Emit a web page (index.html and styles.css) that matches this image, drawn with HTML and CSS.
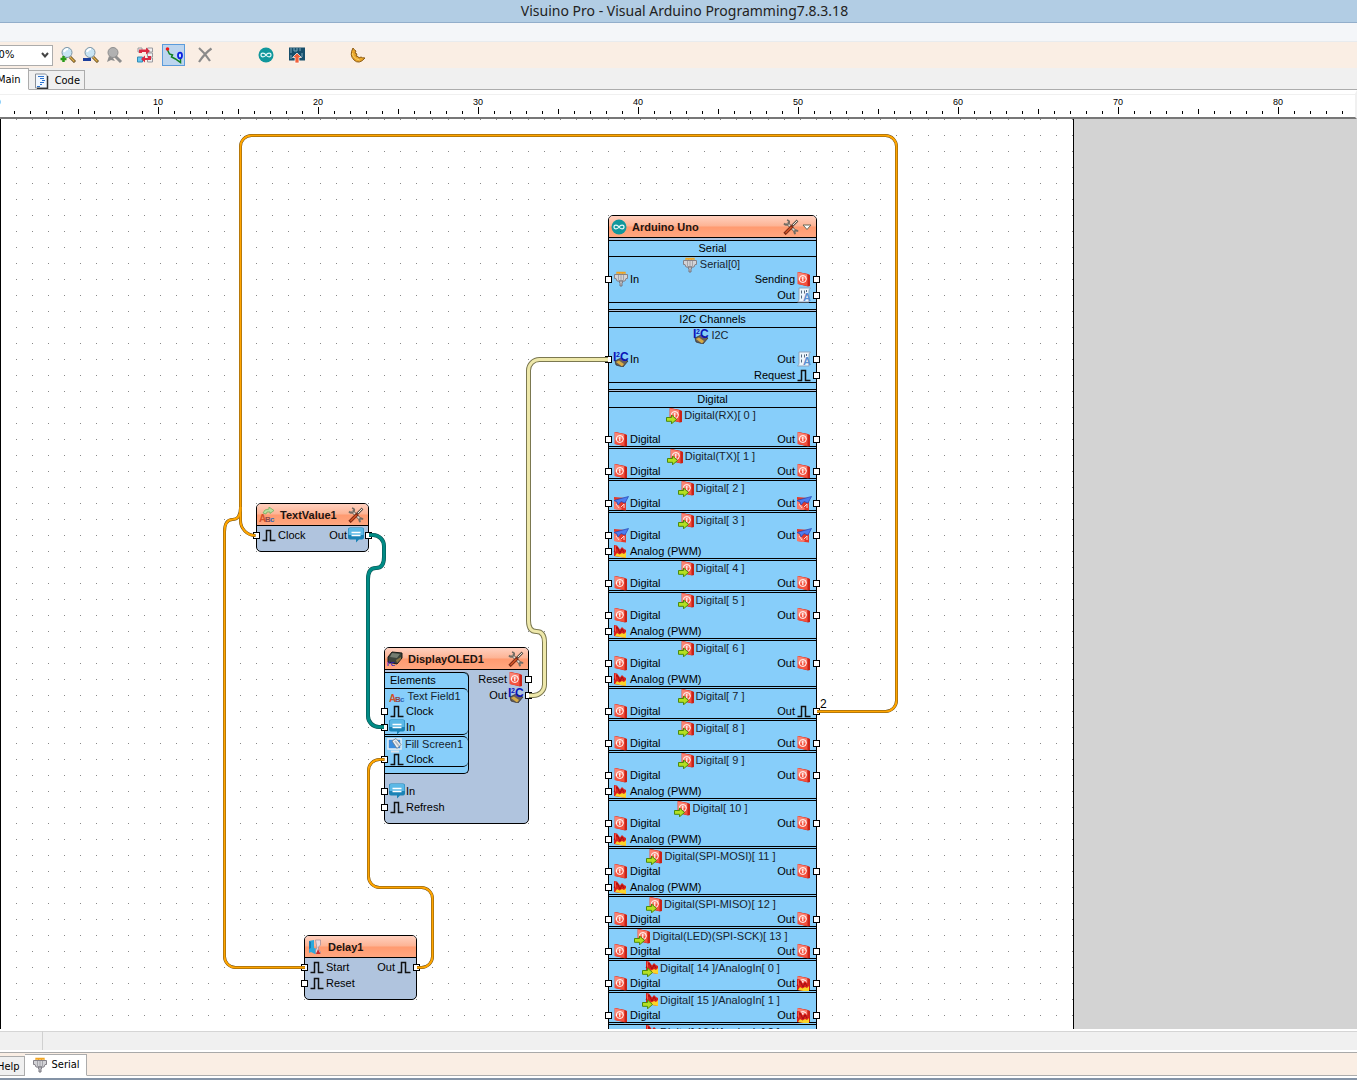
FILE: index.html
```html
<!DOCTYPE html>
<html lang="en">
<head>
<meta charset="utf-8">
<title>Visuino Pro</title>
<link rel="stylesheet" href="styles.css">
</head>
<body>
<svg class="defs" aria-hidden="true">
  <symbol id="power" viewBox="0 0 16 16">
    <path d="M2 1l10 2 2 1v11l-2 .5L2 13z" fill="#c92318"/>
    <path d="M1.500 1l10 2v12l-10-2z" fill="#f4523f"/>
    <path d="M2 1.500l9 2v5q-5-2-9 1z" fill="#fa8373"/>
    <circle cx="6.800" cy="8" r="3.500" fill="none" stroke="#fff" stroke-width="1"/>
    <path d="M6.800 5.800v4.400" stroke="#fff" stroke-width="1.200"/>
  </symbol>
  <symbol id="arrow" viewBox="0 0 16 16">
    <path d="M.5 9.500h5V7l5 4.500-5 4.300v-2.500h-5z" fill="#b4e021" stroke="#4b8a0d"/>
  </symbol>
  <symbol id="power-in" viewBox="0 0 16 16">
    <g transform="translate(2 -1)"><use href="#power" width="16" height="16"/></g>
    <use href="#arrow" width="16" height="16"/>
  </symbol>
  <symbol id="flame" viewBox="0 0 16 16">
    <path d="M1 2l3 .5 3 4L9 4l2 2 2 1v8L1 13z" fill="#d8201c"/>
    <path d="M2 13l2-3 2.500 1.500L9 10l2 1 2-2v6z" fill="#fbd428"/>
    <path d="M1 9l3-5 3 6 2-4 2 3" fill="none" stroke="#a01014"/>
    <path d="M2 3l1 .5V8L2 9z" fill="#f05a48"/>
  </symbol>
  <symbol id="flame-in" viewBox="0 0 16 16">
    <g transform="translate(3 -2)"><use href="#flame" width="16" height="16"/></g>
    <use href="#arrow" width="16" height="16"/>
  </symbol>
  <symbol id="power-flame" viewBox="0 0 16 16">
    <use href="#power" width="16" height="16"/>
    <g transform="translate(0 2)"><use href="#flame" width="16" height="16"/></g>
  </symbol>
  <symbol id="power-alt" viewBox="0 0 16 16">
    <path d="M1 2l12 1v12.500L1 14z" fill="#e23a2b"/>
    <path d="M1 4l8 10-2 1-6-1z" fill="#f8796b"/>
    <path d="M3 9l3 4M8 12l3-3v4" stroke="#ffd9d3" fill="none"/>
    <path d="M1 5.500L8 3.500 15.500 1.500 12 8 8 6.500 5 10 4 7z" fill="#4c7df0" stroke="#1f45b4" stroke-width=".7"/>
  </symbol>
  <symbol id="pulse" viewBox="0 0 16 16">
    <path d="M1.500 13.500h4v-10h4v10h5" fill="none" stroke="#111" stroke-width="1.500"/>
  </symbol>
  <symbol id="plug" viewBox="0 0 16 16">
    <path d="M4 3V1.500h2V3M7 3V1.500h2V3M10 3V1.500h2V3" fill="none" stroke="#f0a423" stroke-width="1.300"/>
    <path d="M1.500 3.500h13v4h-1.500l-1 2.500h-8L3 7.500H1.500z" fill="#d3d3d6" stroke="#858289"/>
    <path d="M5.500 4v5M8 4v5M10.500 4v5" stroke="#a4a4aa"/>
    <path d="M6 10h4l-1 2.500V15H7v-2.500z" fill="#c4c4c8" stroke="#77757d"/>
  </symbol>
  <symbol id="doc" viewBox="0 0 16 16">
    <path d="M3 1h11.500q-1.500 1-1.500 3v11H1.500Q3 14 3 12z" fill="#eef6fd" stroke="#8ea4bd"/>
    <path d="M5.500 3.500v3M8.500 3.500v3M5.500 8.500v3M10.500 3v2" stroke="#55687e"/>
    <text x="7" y="14" class="glyph doc-letter">A</text>
  </symbol>
  <symbol id="i2c" viewBox="0 0 16 16">
    <path d="M2 10l6-3 7 3-5 6-7-2z" fill="#68605a" stroke="#302b28" stroke-width=".7"/>
    <path d="M3 11l3-1.500 5 3.500-2 2.500z" fill="#d8ac45"/>
    <text x="0" y="10" class="glyph i2c-letter">I</text>
    <text x="3" y="6" class="glyph i2c-two">2</text>
    <text x="7" y="10" class="glyph i2c-letter">C</text>
  </symbol>
  <symbol id="chat" viewBox="0 0 16 16">
    <path d="M2 .5h12q2 0 2 2v8q0 2-2 2h-3l-3 3v-3H2q-2 0-2-2v-8q0-2 2-2z" fill="#1b83b6"/>
    <path d="M2 1h12q1.500 0 1.500 2v5H.5V3Q.5 1 2 1z" fill="#5bb8e6"/>
    <path d="M3.500 5.500h9M3.500 8.500h9" stroke="#fff" stroke-width="1.500"/>
  </symbol>
  <symbol id="tools" viewBox="0 0 16 16">
    <path d="M9 7l5.500-5.500" stroke="#5f564f" stroke-width="2.500"/>
    <path d="M10 6l4-4" stroke="#f3e7d8"/>
    <path d="M4 4l9 9" stroke="#635d55" stroke-width="3"/>
    <path d="M4 4l9 9" stroke="#e5e0d6" stroke-width="1.500"/>
    <path d="M1.500 15L9.500 7" stroke="#7b2b15" stroke-width="3.200"/>
    <path d="M2.500 14L8.500 8" stroke="#d3562a" stroke-width="1.500"/>
    <path d="M1 4.500Q3.500 7 5.500 4.500T4 1M15 12.500q-1.500-2-3-.5t.5 3" fill="none" stroke="#736b62" stroke-width="1.800"/>
  </symbol>
  <symbol id="infinity" viewBox="0 0 16 16">
    <circle cx="8" cy="8" r="7.500" fill="#11979c"/>
    <path d="M8 8C6.500 5.500 3 5.500 3 8s3.500 2.500 5 0 5-2.500 5 0-3.500 2.500-5 0z" fill="none" stroke="#e5f8f8" stroke-width="1.200"/>
  </symbol>
  <symbol id="abc" viewBox="0 0 16 16">
    <text x="0" y="13" class="glyph abc-a">A</text>
    <text x="6" y="13" class="glyph abc-b">B</text>
    <text x="11" y="13" class="glyph abc-c">c</text>
  </symbol>
  <symbol id="abc-in" viewBox="0 0 16 16">
    <path d="M4 6q1-4 6-4V0l5 3.500-4 3V5Q7 4 7 7z" fill="#b9dea0" stroke="#6bac57" stroke-width=".7"/>
    <g transform="translate(0 2)"><use href="#abc" width="16" height="16"/></g>
  </symbol>
  <symbol id="screen" viewBox="0 0 16 16">
    <path d="M1 2h13v10H1z" fill="#3b8dde" stroke="#e9eff5" stroke-width="1.500"/>
    <path d="M5 4l4-2.500 5 6-4 4z" fill="#eef1f4" stroke="#697785" stroke-width=".8"/>
    <path d="M8 4l4 5" stroke="#b5bec8" stroke-width="2"/>
    <path d="M4 14.500h8" stroke="#dbe2e8" stroke-width="2"/>
  </symbol>
  <symbol id="chip" viewBox="0 0 16 16">
    <path d="M1 6l4-5 10 1v5l-5 6-9-2z" fill="#3b423a" stroke="#181a18"/>
    <path d="M5 2l8 1-3 4-7-1z" fill="#747c70"/>
    <path d="M9 9l5-3v2l-4 4z" fill="#8a7440"/>
    <text x="0" y="15" class="glyph chip-letter">I²C</text>
  </symbol>
  <symbol id="delay" viewBox="0 0 16 16">
    <path d="M2 2l5-1v8l3 1v4l-2 1-4-2-2 1z" fill="#2ca9dc"/>
    <path d="M2 2l2 1v6L2 10z" fill="#177bb0"/>
    <path d="M8.500 1h5v5l-2 2v2l2 3v1h-5v-3l1.500-2z" fill="#efdadd" stroke="#9d8a95" stroke-width=".7"/>
    <path d="M11 10l2.500 5H9z" fill="#cc2b2b"/>
  </symbol>
  <symbol id="lens" viewBox="0 0 16 16">
    <path d="M10 10l5 5" stroke="#5b4317" stroke-width="3"/>
    <path d="M10 10l4.500 4.500" stroke="#e0b04c" stroke-width="1.500"/>
    <circle cx="7" cy="5.500" r="5" fill="#c8e4f3" stroke="#7c94a5"/>
    <path d="M4 5q1-3 4-3" fill="none" stroke="#fff" stroke-width="2"/>
  </symbol>
</svg>

<header class="titlebar"><h1>Visuino Pro - Visual Arduino Programming7.8.3.18</h1></header>
<nav class="menubar" aria-label="Menu"></nav>

<div class="toolbar" role="toolbar">
  <div class="zoom-box">
    <select class="zoom-select" aria-label="Zoom"><option>100%</option></select>
    <svg class="zoom-arrow" viewBox="0 0 8 6"><path d="M1 1l3 3.500L7 1" fill="none" stroke="#444" stroke-width="2"/></svg>
  </div>
  <div class="group">
    <button class="tool" aria-label="Zoom in"><svg viewBox="0 0 16 16"><use href="#lens"/><path d="M3.500 9v6M.5 12h6" stroke="#2a9a18" stroke-width="2.500"/></svg></button>
    <button class="tool" aria-label="Zoom out"><svg viewBox="0 0 16 16"><use href="#lens"/><path d="M0 12.500h8" stroke="#1d3f9c" stroke-width="3"/></svg></button>
    <button class="tool" aria-label="Zoom to fit" disabled><svg viewBox="0 0 16 16"><path d="M9 9l6 6" stroke="#8d8d8d" stroke-width="3"/><circle cx="7" cy="5.500" r="5" fill="#b1b1b1" stroke="#8f8f8f"/><path d="M3 9l4 2 2 3-4-1-4 2 1-3z" fill="#8d8d8d"/></svg></button>
  </div>
  <div class="group">
    <button class="tool" aria-label="Swap components"><svg viewBox="0 0 16 16"><path d="M10.500 1h5v4h-5zM10.500 6h5v4h-5zM10.500 11h5v4h-5zM1 1h4v4H1z" fill="#f0f0f2" stroke="#9a9a9f"/><path d="M.5 10h5v5h-5z" fill="#67c7ef" stroke="#338bb5"/><path d="M2 6V2.500h7V.5L13 4 9 7.500V5H5v1zM14 9v4H8v2.500L4 12l4-3.500V11h3V9z" fill="#d92b42"/></svg></button>
  </div>
  <div class="group">
    <button class="tool active" aria-label="Connect" aria-pressed="true"><svg viewBox="0 0 16 16"><path d="M1.500 3l2 4 3 1-1 2 4 2 5 3.500V11" fill="none" stroke="#108020" stroke-width="1.500"/><circle cx="1.500" cy="2" r="1.800" fill="#f01818"/><ellipse cx="14" cy="8.500" rx="2" ry="2.800" fill="#cfe0ff" stroke="#0a20e0" stroke-width="1.800"/></svg></button>
  </div>
  <div class="group">
    <button class="tool" aria-label="Delete" disabled><svg viewBox="0 0 16 16"><path d="M2 1q6 5 11 13M14.500 1.500Q8 6 2 15" fill="none" stroke="#8a8a8a" stroke-width="2.200"/></svg></button>
  </div>
  <div class="group wide">
    <button class="tool" aria-label="Arduino"><svg viewBox="0 0 16 16"><use href="#infinity"/></svg></button>
  </div>
  <div class="group">
    <button class="tool" aria-label="Upload"><svg viewBox="0 0 16 16"><path d="M0 .5h16v13H0z" fill="#174e6b"/><path d="M2 1v5M5 1v3h3V1M11 1v3M13 6v4M2 8v4" fill="none" stroke="#7ca9bd"/><path d="M8 6l4.500 4.500H10V16H6v-5.500H3.500z" fill="#f2613b" stroke="#fff" stroke-width=".7"/></svg></button>
  </div>
  <div class="group wide">
    <button class="tool" aria-label="Night mode"><svg viewBox="0 0 16 16"><path d="M3 1Q-1 8 4 13t11-2q-3 0-4-1l-2 1-1-1.500L6 9l1-2-2-1 1-2Q4 3 3 1z" fill="#e9a62a" stroke="#8c5a13"/><path d="M2.500 6q0 5 7 7" fill="none" stroke="#fbd36a"/></svg></button>
  </div>
</div>

<div class="tabs" role="tablist">
  <button class="tab selected" role="tab" aria-selected="true">Main</button>
  <button class="tab" role="tab"><svg viewBox="0 0 16 16"><path d="M1.500 1h10l2 2v12h-12z" fill="#f2f8ff" stroke="#8a9099"/><path d="M13.500 3v12.500H3" fill="none" stroke="#333" stroke-width="1.500"/><path d="M4 3.500h6M6 5.500h4M8 7.500h3M6 9.500h4M6 11.500h2M3 13.500h3" stroke="#2e74cf"/></svg>Code</button>
</div>

<div class="ruler">
  <svg class="ticks" aria-hidden="true">
    <pattern id="tick-pattern" x="-2" width="160" height="22" patternUnits="userSpaceOnUse">
      <path d="M0 13h1v7h-1zM80 15h1v5h-1zM16 17h1v3h-1zM32 17h1v3h-1zM48 17h1v3h-1zM64 17h1v3h-1zM96 17h1v3h-1zM112 17h1v3h-1zM128 17h1v3h-1zM144 17h1v3h-1z"/>
    </pattern>
    <rect width="100%" height="22" fill="url(#tick-pattern)"/>
  </svg>
  <div class="numbers"><span>0</span><span>10</span><span>20</span><span>30</span><span>40</span><span>50</span><span>60</span><span>70</span><span>80</span></div>
</div>

<main class="canvas">
  <div class="paper"></div>

  <section class="node uno">
    <header class="node-head"><svg class="ic"><use href="#infinity"/></svg><h2>Arduino Uno</h2><svg class="ic"><use href="#tools"/></svg><svg class="caret" viewBox="0 0 10 8"><path d="M1 2h8L5 6.500z" fill="#fff" stroke="#665"/></svg></header>
    <div class="body">
      <div class="block">
        <h3>Serial</h3>
        <div class="item"><h4><svg class="ic"><use href="#plug"/></svg>Serial[0]</h4>
          <div class="row"><span class="port"><i class="pin"></i><svg class="ic"><use href="#plug"/></svg>In</span><span class="port">Sending<svg class="ic"><use href="#power"/></svg><i class="pin"></i></span></div>
          <div class="row"><span class="port"></span><span class="port">Out<svg class="ic"><use href="#doc"/></svg><i class="pin"></i></span></div>
        </div>
      </div>
      <div class="block">
        <h3>I2C Channels</h3>
        <div class="item tall"><h4><svg class="ic"><use href="#i2c"/></svg>I2C</h4>
          <div class="row"><span class="port"><i class="pin"></i><svg class="ic"><use href="#i2c"/></svg>In</span><span class="port">Out<svg class="ic"><use href="#doc"/></svg><i class="pin"></i></span></div>
          <div class="row"><span class="port"></span><span class="port">Request<svg class="ic"><use href="#pulse"/></svg><i class="pin"></i></span></div>
        </div>
      </div>
      <div class="block">
        <h3>Digital</h3>
        <div class="item tall"><h4><svg class="ic"><use href="#power-in"/></svg>Digital(RX)[ 0 ]</h4>
          <div class="row"><span class="port"><i class="pin"></i><svg class="ic"><use href="#power"/></svg>Digital</span><span class="port">Out<svg class="ic"><use href="#power"/></svg><i class="pin"></i></span></div>
        </div>
        <div class="item"><h4><svg class="ic"><use href="#power-in"/></svg>Digital(TX)[ 1 ]</h4>
          <div class="row"><span class="port"><i class="pin"></i><svg class="ic"><use href="#power"/></svg>Digital</span><span class="port">Out<svg class="ic"><use href="#power"/></svg><i class="pin"></i></span></div>
        </div>
        <div class="item"><h4><svg class="ic"><use href="#power-in"/></svg>Digital[ 2 ]</h4>
          <div class="row"><span class="port"><i class="pin"></i><svg class="ic"><use href="#power-alt"/></svg>Digital</span><span class="port">Out<svg class="ic"><use href="#power-alt"/></svg><i class="pin"></i></span></div>
        </div>
        <div class="item"><h4><svg class="ic"><use href="#power-in"/></svg>Digital[ 3 ]</h4>
          <div class="row"><span class="port"><i class="pin"></i><svg class="ic"><use href="#power-alt"/></svg>Digital</span><span class="port">Out<svg class="ic"><use href="#power-alt"/></svg><i class="pin"></i></span></div>
          <div class="row"><span class="port"><i class="pin"></i><svg class="ic"><use href="#flame"/></svg>Analog (PWM)</span></div>
        </div>
        <div class="item"><h4><svg class="ic"><use href="#power-in"/></svg>Digital[ 4 ]</h4>
          <div class="row"><span class="port"><i class="pin"></i><svg class="ic"><use href="#power"/></svg>Digital</span><span class="port">Out<svg class="ic"><use href="#power"/></svg><i class="pin"></i></span></div>
        </div>
        <div class="item"><h4><svg class="ic"><use href="#power-in"/></svg>Digital[ 5 ]</h4>
          <div class="row"><span class="port"><i class="pin"></i><svg class="ic"><use href="#power"/></svg>Digital</span><span class="port">Out<svg class="ic"><use href="#power"/></svg><i class="pin"></i></span></div>
          <div class="row"><span class="port"><i class="pin"></i><svg class="ic"><use href="#flame"/></svg>Analog (PWM)</span></div>
        </div>
        <div class="item"><h4><svg class="ic"><use href="#power-in"/></svg>Digital[ 6 ]</h4>
          <div class="row"><span class="port"><i class="pin"></i><svg class="ic"><use href="#power"/></svg>Digital</span><span class="port">Out<svg class="ic"><use href="#power"/></svg><i class="pin"></i></span></div>
          <div class="row"><span class="port"><i class="pin"></i><svg class="ic"><use href="#flame"/></svg>Analog (PWM)</span></div>
        </div>
        <div class="item"><h4><svg class="ic"><use href="#power-in"/></svg>Digital[ 7 ]</h4>
          <div class="row"><span class="port"><i class="pin"></i><svg class="ic"><use href="#power"/></svg>Digital</span><span class="port">Out<svg class="ic"><use href="#pulse"/></svg><i class="pin"></i></span></div>
        </div>
        <div class="item"><h4><svg class="ic"><use href="#power-in"/></svg>Digital[ 8 ]</h4>
          <div class="row"><span class="port"><i class="pin"></i><svg class="ic"><use href="#power"/></svg>Digital</span><span class="port">Out<svg class="ic"><use href="#power"/></svg><i class="pin"></i></span></div>
        </div>
        <div class="item"><h4><svg class="ic"><use href="#power-in"/></svg>Digital[ 9 ]</h4>
          <div class="row"><span class="port"><i class="pin"></i><svg class="ic"><use href="#power"/></svg>Digital</span><span class="port">Out<svg class="ic"><use href="#power"/></svg><i class="pin"></i></span></div>
          <div class="row"><span class="port"><i class="pin"></i><svg class="ic"><use href="#flame"/></svg>Analog (PWM)</span></div>
        </div>
        <div class="item"><h4><svg class="ic"><use href="#power-in"/></svg>Digital[ 10 ]</h4>
          <div class="row"><span class="port"><i class="pin"></i><svg class="ic"><use href="#power"/></svg>Digital</span><span class="port">Out<svg class="ic"><use href="#power"/></svg><i class="pin"></i></span></div>
          <div class="row"><span class="port"><i class="pin"></i><svg class="ic"><use href="#flame"/></svg>Analog (PWM)</span></div>
        </div>
        <div class="item"><h4><svg class="ic"><use href="#power-in"/></svg>Digital(SPI-MOSI)[ 11 ]</h4>
          <div class="row"><span class="port"><i class="pin"></i><svg class="ic"><use href="#power"/></svg>Digital</span><span class="port">Out<svg class="ic"><use href="#power"/></svg><i class="pin"></i></span></div>
          <div class="row"><span class="port"><i class="pin"></i><svg class="ic"><use href="#flame"/></svg>Analog (PWM)</span></div>
        </div>
        <div class="item"><h4><svg class="ic"><use href="#power-in"/></svg>Digital(SPI-MISO)[ 12 ]</h4>
          <div class="row"><span class="port"><i class="pin"></i><svg class="ic"><use href="#power"/></svg>Digital</span><span class="port">Out<svg class="ic"><use href="#power"/></svg><i class="pin"></i></span></div>
        </div>
        <div class="item"><h4><svg class="ic"><use href="#power-in"/></svg>Digital(LED)(SPI-SCK)[ 13 ]</h4>
          <div class="row"><span class="port"><i class="pin"></i><svg class="ic"><use href="#power"/></svg>Digital</span><span class="port">Out<svg class="ic"><use href="#power"/></svg><i class="pin"></i></span></div>
        </div>
        <div class="item"><h4><svg class="ic"><use href="#flame-in"/></svg>Digital[ 14 ]/AnalogIn[ 0 ]</h4>
          <div class="row"><span class="port"><i class="pin"></i><svg class="ic"><use href="#power"/></svg>Digital</span><span class="port">Out<svg class="ic"><use href="#power-flame"/></svg><i class="pin"></i></span></div>
        </div>
        <div class="item"><h4><svg class="ic"><use href="#flame-in"/></svg>Digital[ 15 ]/AnalogIn[ 1 ]</h4>
          <div class="row"><span class="port"><i class="pin"></i><svg class="ic"><use href="#power"/></svg>Digital</span><span class="port">Out<svg class="ic"><use href="#power-flame"/></svg><i class="pin"></i></span></div>
        </div>
        <div class="item"><h4><svg class="ic"><use href="#flame-in"/></svg>Digital[ 16 ]/AnalogIn[ 2 ]</h4>
          <div class="row"><span class="port"><i class="pin"></i><svg class="ic"><use href="#power"/></svg></span></div>
        </div>
      </div>
    </div>
  </section>

  <section class="node text-value">
    <header class="node-head"><svg class="ic"><use href="#abc-in"/></svg><h2>TextValue1</h2><svg class="ic"><use href="#tools"/></svg></header>
    <div class="ports">
      <div class="row"><span class="port"><i class="pin"></i><svg class="ic"><use href="#pulse"/></svg>Clock</span><span class="port">Out<svg class="ic"><use href="#chat"/></svg><i class="pin"></i></span></div>
    </div>
  </section>

  <section class="node oled">
    <header class="node-head"><svg class="ic"><use href="#chip"/></svg><h2>DisplayOLED1</h2><svg class="ic"><use href="#tools"/></svg></header>
    <div class="split">
      <div class="inputs">
        <div class="block rounded">
          <h3>Elements</h3>
          <div class="item"><h4><svg class="ic"><use href="#abc"/></svg>Text Field1</h4>
            <div class="row"><span class="port"><i class="pin"></i><svg class="ic"><use href="#pulse"/></svg>Clock</span></div>
            <div class="row"><span class="port"><i class="pin"></i><svg class="ic"><use href="#chat"/></svg>In</span></div>
          </div>
          <div class="item"><h4><svg class="ic"><use href="#screen"/></svg>Fill Screen1</h4>
            <div class="row"><span class="port"><i class="pin"></i><svg class="ic"><use href="#pulse"/></svg>Clock</span></div>
          </div>
        </div>
        <div class="row"><span class="port"><i class="pin"></i><svg class="ic"><use href="#chat"/></svg>In</span></div>
        <div class="row"><span class="port"><i class="pin"></i><svg class="ic"><use href="#pulse"/></svg>Refresh</span></div>
      </div>
      <div class="outputs">
        <div class="row"><span class="port">Reset<svg class="ic"><use href="#power"/></svg><i class="pin"></i></span></div>
        <div class="row"><span class="port">Out<svg class="ic"><use href="#i2c"/></svg><i class="pin"></i></span></div>
      </div>
    </div>
  </section>

  <section class="node delay">
    <header class="node-head"><svg class="ic"><use href="#delay"/></svg><h2>Delay1</h2></header>
    <div class="ports">
      <div class="row"><span class="port"><i class="pin"></i><svg class="ic"><use href="#pulse"/></svg>Start</span><span class="port">Out<svg class="ic"><use href="#pulse"/></svg><i class="pin"></i></span></div>
      <div class="row"><span class="port"><i class="pin"></i><svg class="ic"><use href="#pulse"/></svg>Reset</span></div>
    </div>
  </section>

  <svg class="wires" aria-hidden="true">
    <defs>
      <path id="w-digital" d="M817 592.500H885.500a11 11 0 0 0 11-11V27.500a11 11 0 0 0-11-11H251.500a11 11 0 0 0-11 11V401a15 15 0 0 0 15 15.500"/>
      <path id="w-start" d="M240.500 388q0 12.500-8 12.500t-8 12.500V837.500a11 11 0 0 0 11 11H305"/>
      <path id="w-fill" d="M417 848.500h4.500a11 11 0 0 0 11-11V779.500a11 11 0 0 0-11-11H379.500a11 11 0 0 1-11-11V651.500a11 11 0 0 1 11-11h5"/>
      <path id="w-text" d="M369 416h4a11 11 0 0 1 11 11v11q0 11-8 11t-8 11V597a11 11 0 0 0 11 11h5"/>
      <path id="w-i2c" d="M529 576.500h4.500a11 11 0 0 0 11-11V523.500q0-11-8-11t-8-11V251.500a11 11 0 0 1 11-11H608"/>
    </defs>
    <g class="thin"><use href="#w-start" class="edge"/><use href="#w-digital" class="edge"/><use href="#w-fill" class="edge"/>
      <use href="#w-start" class="core"/><use href="#w-digital" class="core"/><use href="#w-fill" class="core"/></g>
    <g class="text"><use href="#w-text" class="edge"/><use href="#w-text" class="core"/></g>
    <g class="bus"><use href="#w-i2c" class="edge"/><use href="#w-i2c" class="core"/></g>
    <text x="820" y="589" class="wire-count">2</text>
  </svg>
</main>

<div class="status"><span class="status-cell"></span></div>

<div class="bottom-tabs" role="tablist">
  <button class="tab" role="tab">Help</button>
  <button class="tab selected" role="tab" aria-selected="true"><svg viewBox="0 0 16 16"><use href="#plug"/></svg>Serial</button>
</div>
<footer class="strip"></footer>
</body>
</html>
```
FILE: styles.css
```css
* { box-sizing: border-box; }

body {
  margin: 0;
  height: 100vh;
  display: flex;
  flex-direction: column;
  overflow: hidden;
  background: #fff;
  color: #000;
  font: 11px/16px "DejaVu Sans Condensed", "DejaVu Sans", sans-serif;
}

h1, h2, h3, h4 { margin: 0; font-size: inherit; font-weight: normal; }
button, select { font: inherit; color: inherit; }
.defs { display: none; }

/* Window chrome */
.titlebar {
  flex: none;
  height: 23px;
  padding-left: 12px;
  background: #b2cde4;
  border-bottom: 1px solid #92aecb;
  text-align: center;
}
.titlebar h1 { font: 14px/22px "Noto Sans", "Open Sans", sans-serif; color: #222; }
.menubar { flex: none; height: 19px; background: #f4f6f9; border-bottom: 1px solid #e8ebee; }

.toolbar {
  flex: none;
  display: flex;
  align-items: center;
  height: 26px;
  background: #faeee4;
}
.zoom-box { display: flex; align-items: center; margin: 0 3px 0 -20px; }
.zoom-select {
  appearance: none;
  width: 73px;
  height: 21px;
  padding: 0 5px;
  border: 1px solid #acacac;
  border-radius: 0;
  background: #fff;
}
.zoom-arrow { width: 8px; height: 6px; margin-left: -12px; margin-right: 4px; pointer-events: none; }
.group { display: flex; margin-left: 8px; }
.group:nth-child(2) { margin-left: 0; }
.group:nth-child(4) { margin-left: 6px; }
.group.wide { margin-left: 38px; }
.tool {
  display: grid;
  place-items: center;
  width: 23px;
  height: 22px;
  padding: 0;
  border: 1px solid transparent;
  background: none;
}
.tool svg { width: 16px; height: 16px; overflow: visible; }
.tool.active { background: #bdd5ee; border-color: #5b9bdb; }

.tabs {
  flex: none;
  display: flex;
  align-items: flex-end;
  height: 22px;
  background: linear-gradient(#acacac, #acacac) bottom / 100% 1px no-repeat #f0f0f0;
}
.tab {
  display: flex;
  align-items: center;
  gap: 5px;
  height: 20px;
  padding: 2px 4px 0;
  border: 1px solid #acacac;
  border-left: 0;
  background: #f0f0f0;
}
.tab svg { width: 16px; height: 16px; }
.tab.selected { height: 22px; background: #fff; border-bottom-color: #fff; }
.tabs .tab { padding-left: 5px; }
.tabs .tab.selected { margin-left: -8px; padding: 1px 7px 0 5px; }

/* Ruler */
.ruler {
  flex: none;
  height: 29px;
  border-top: 4px solid #fff;
  border-right: 2px solid #f0f0f0;
  border-bottom: 2px solid #777;
  box-shadow: inset 0 1px #f0f0f0;
  overflow: hidden;
  display: grid;
}
.ticks, .numbers { grid-area: 1 / 1; }
.ticks { width: 100%; height: 23px; }
.numbers { display: flex; margin-left: -82px; }
.numbers span {
  flex: none;
  width: 160px;
  text-align: center;
  font: 9px/16px "Liberation Sans", sans-serif;
}

/* Design surface */
.canvas {
  flex: 1;
  min-height: 0;
  position: relative;
  overflow: hidden;
  background: #d3d3d3;
  font: 11px/16px "Liberation Sans", sans-serif;
}
.paper {
  width: 1074px;
  height: 100%;
  border: 0 solid #000;
  border-width: 0 1px;
  background: conic-gradient(from 270deg at 1px 1px, #888 90deg, transparent 0) border-box 0 0 / 16px 16px #fff;
}
.node {
  position: absolute;
  border: 1px solid #000;
  border-radius: 5px;
  background: #b0c4de;
}
.uno { left: 608px; top: 96px; width: 209px; }
.text-value { left: 256px; top: 384px; width: 113px; }
.oled { left: 384px; top: 528px; width: 145px; }
.delay { left: 304px; top: 816px; width: 113px; }

.node-head {
  display: flex;
  align-items: center;
  gap: 5px;
  height: 22px;
  padding: 0 4px 0 2px;
  border-bottom: 1px solid #000;
  border-radius: 4px 4px 0 0;
  background: linear-gradient(#ffd0bf, #fdb394 48%, #ff9a70 52%, #ffa780);
}
.node-head h2 { flex: 1; font-weight: bold; color: #1c1411; }
.caret { width: 10px; height: 8px; margin-left: -2px; }
.ic { flex: none; width: 16px; height: 16px; overflow: visible; }

.body { padding-top: 2px; }
.block {
  margin-bottom: 1px;
  padding-bottom: 5px;
  border-bottom: 1px solid #000;
  background: #87cefa;
}
.block h3 { height: 16px; border-top: 1px solid #000; line-height: 15px; text-align: center; }
.item { margin-bottom: 1px; border: 0 solid #000; border-width: 1px 0; }
.item h4 {
  display: flex;
  align-items: center;
  justify-content: center;
  gap: 2px;
  height: 14px;
  padding-right: 3px;
  color: #16242e;
}
.item h4 .ic { margin-top: 2px; }
.item.tall h4 { margin-bottom: 9px; }
.item .row:last-child { height: 15px; }

.row { display: flex; justify-content: space-between; height: 16px; }
.port { display: flex; align-items: center; gap: 1px; height: 16px; white-space: nowrap; }
.pin { flex: none; width: 7px; height: 7px; margin: 0 -4px; border: 1px solid #000; background: #fff; }
.port .pin:first-child { margin-right: 0; }
.port .pin:last-child { margin-left: 0; }

.ports { padding: 1px 0 8px; }
.split { display: flex; justify-content: space-between; padding-bottom: 8px; }
.inputs { width: 84px; padding-top: 2px; }
.outputs { padding-top: 1px; }
.outputs .row { justify-content: flex-end; }
.block.rounded {
  margin-bottom: 9px;
  border-right: 1px solid #000;
  border-radius: 0 5px 5px 0;
}
.block.rounded h3 { padding-left: 5px; border-radius: 0 5px 0 0; text-align: left; }
.block.rounded .item { border-radius: 0 5px 5px 0; }

.wires { position: absolute; inset: 0; width: 100%; height: 100%; fill: none; pointer-events: none; }
.edge { stroke: #6e4d12; stroke-width: 3px; }
.core { stroke: #ffa500; stroke-width: 2px; }
.text .edge { stroke: #0b4a4a; stroke-width: 4px; }
.text .core { stroke: #008b85; stroke-width: 3px; }
.bus .edge { stroke: #7b7850; stroke-width: 5px; }
.bus .core { stroke: #eee8aa; stroke-width: 3px; }
.wire-count { fill: #000; font-size: 12px; }

/* Lettering inside icons */
.glyph { font-family: "Liberation Sans", sans-serif; font-weight: bold; }
.doc-letter { font-size: 11px; fill: #5b8fd0; }
.i2c-letter { font-size: 12px; fill: #0a14b8; }
.i2c-two { font-size: 7px; fill: #0a14b8; }
.abc-a { font-size: 10px; fill: #d2512a; }
.abc-b { font-size: 8px; fill: #8a4a4a; }
.abc-c { font-size: 8px; fill: #2f67b5; }
.chip-letter { font-size: 6px; fill: #2018c0; }

/* Lower area */
.status {
  flex: none;
  height: 23px;
  border-top: 2px solid #fff;
  border-bottom: 2px solid #fff;
  background: #f0f0f0;
  box-shadow: inset 0 1px #d5d5d5;
  display: flex;
}
.status-cell { width: 43px; border-right: 1px solid #d0d0d0; }
.bottom-tabs {
  flex: none;
  display: flex;
  align-items: flex-end;
  height: 24px;
  border-top: 1px solid #a9a9a9;
  background: linear-gradient(#acacac, #acacac) bottom / 100% 1px no-repeat #faeee4;
}
.bottom-tabs .tab { margin-left: -7px; }
.bottom-tabs .tab.selected { margin-left: 0; gap: 4px; padding: 0 6px 0 7px; }
.strip { flex: none; height: 4px; border-top: 2px solid #fff; background: #8493a6; }
```
